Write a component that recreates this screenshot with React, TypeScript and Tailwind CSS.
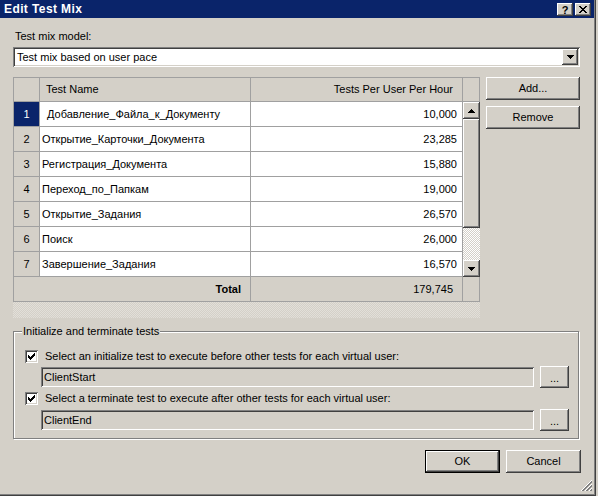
import React from "react";

const raised =
  "shadow-[inset_-1px_-1px_0_#404040,inset_1px_1px_0_#ffffff,inset_-2px_-2px_0_#808080]";
const sunken =
  "shadow-[inset_1px_1px_0_#808080,inset_-1px_-1px_0_#ffffff,inset_2px_2px_0_#404040,inset_-2px_-2px_0_#d4d0c8]";

const rows: [string, string][] = [
  ["Добавление_Файла_к_Документу", "10,000"],
  ["Открытие_Карточки_Документа", "23,285"],
  ["Регистрация_Документа", "15,880"],
  ["Переход_по_Папкам", "19,000"],
  ["Открытие_Задания", "26,570"],
  ["Поиск", "26,000"],
  ["Завершение_Задания", "16,570"],
];

function DownArrow() {
  return (
    <svg width="7" height="4" viewBox="0 0 7 4" shapeRendering="crispEdges">
      <path d="M0 0h7v1h-7z M1 1h5v1h-5z M2 2h3v1h-3z M3 3h1v1h-1z" fill="#000" />
    </svg>
  );
}

function UpArrow() {
  return (
    <svg width="7" height="4" viewBox="0 0 7 4" shapeRendering="crispEdges">
      <path d="M3 0h1v1h-1z M2 1h3v1h-3z M1 2h5v1h-5z M0 3h7v1h-7z" fill="#000" />
    </svg>
  );
}

function Check() {
  return (
    <svg width="13" height="13" viewBox="0 0 13 13" shapeRendering="crispEdges" className="absolute left-0 top-0">
      <path
        d="M3 5h1v3h-1z M4 6h1v3h-1z M5 7h1v3h-1z M6 6h1v3h-1z M7 5h1v3h-1z M8 4h1v3h-1z M9 3h1v3h-1z"
        fill="#000"
      />
    </svg>
  );
}

function CheckBox() {
  return (
    <div className={`relative w-[13px] h-[13px] bg-white shrink-0 ${sunken}`}>
      <Check />
    </div>
  );
}

export default function App() {
  return (
    <div className="relative w-[598px] h-[496px] bg-[#d4d0c8] overflow-hidden font-['Liberation_Sans',Arial,sans-serif] text-[11px] leading-none text-black">
      <div className="w-[596px] h-[496px] flex flex-col shadow-[inset_-1px_-1px_0_#404040,inset_-2px_-2px_0_#808080]">
        {/* Title bar */}
        <div className="w-[594px] h-[18px] bg-[#0a246a] flex items-center pl-[4px] shrink-0">
          <span className="text-white font-bold text-[12px] tracking-[0.4px]">Edit Test Mix</span>
          <div className="ml-auto mr-[3px] flex gap-[2px] self-start mt-[3px]">
            <div className={`w-[16px] h-[13px] bg-[#d4d0c8] flex items-center justify-center ${raised}`}>
              <span className="font-bold text-[11px] leading-none mt-[1px]">?</span>
            </div>
            <div className={`w-[16px] h-[13px] bg-[#d4d0c8] flex items-center justify-center ${raised}`}>
              <svg width="8" height="7" viewBox="0 0 8 7" shapeRendering="crispEdges">
                <path
                  d="M0 0h2v1h-2z M6 0h2v1h-2z M1 1h2v1h-2z M5 1h2v1h-2z M2 2h4v1h-4z M3 3h2v1h-2z M2 4h4v1h-4z M1 5h2v1h-2z M5 5h2v1h-2z M0 6h2v1h-2z M6 6h2v1h-2z"
                  fill="#000"
                />
              </svg>
            </div>
          </div>
        </div>

        {/* Content */}
        <div className="pl-[13px] flex flex-col w-[580px]">
          <div className="mt-[13px] pl-[2px]">Test mix model:</div>

          {/* Dropdown */}
          <div className={`mt-[5px] w-[567px] h-[20px] bg-white flex items-center pl-[4px] pr-[2px] ${sunken}`}>
            <span>Test mix based on user pace</span>
            <div className={`ml-auto w-[16px] h-[16px] bg-[#d4d0c8] flex items-center justify-center ${raised}`}>
              <DownArrow />
            </div>
          </div>

          {/* Table + buttons */}
          <div className="mt-[10px] flex gap-[6px]">
            <div className="w-[467px] flex flex-col">
              <div className="border-l border-t border-[#a0a0a0] flex flex-col">
                {/* header */}
                <div className="flex h-[24px] bg-[#d4d0c8]">
                  <div className="w-[26px] border-r border-b border-[#a0a0a0]" />
                  <div className="w-[211px] border-r border-b border-[#a0a0a0] flex items-center pl-[6px]">
                    Test Name
                  </div>
                  <div className="w-[212px] border-r border-b border-[#a0a0a0] flex items-center justify-end pr-[9px]">
                    Tests Per User Per Hour
                  </div>
                  <div className="w-[17px] border-r border-b border-[#a0a0a0]" />
                </div>
                {/* body */}
                <div className="flex">
                  <div className="flex flex-col w-[449px]">
                    {rows.map(([name, value], i) => (
                      <div key={i} className="flex h-[25px]">
                        <div
                          className={`w-[26px] border-r border-b border-[#a0a0a0] flex items-center justify-center ${
                            i === 0 ? "bg-[#0a246a] text-white" : "bg-[#d4d0c8]"
                          }`}
                        >
                          {i + 1}
                        </div>
                        <div
                          className={`w-[211px] border-r border-b border-[#a0a0a0] bg-white flex items-center ${
                            i === 0 ? "pl-[7px]" : "pl-[2px]"
                          }`}
                        >
                          {name}
                        </div>
                        <div className="w-[212px] border-r border-b border-[#a0a0a0] bg-white flex items-center justify-end pr-[5px]">
                          {value}
                        </div>
                      </div>
                    ))}
                  </div>
                  {/* scrollbar */}
                  <div className="w-[17px] h-[175px] flex flex-col">
                    <div className={`h-[17px] bg-[#d4d0c8] flex items-center justify-center ${raised}`}>
                      <UpArrow />
                    </div>
                    <div className={`h-[109px] bg-[#d4d0c8] ${raised}`} />
                    <div className="h-[32px] bg-[image:repeating-conic-gradient(#ffffff_0%_25%,#d4d0c8_0%_50%)] bg-[length:2px_2px]" />
                    <div className={`h-[17px] bg-[#d4d0c8] flex items-center justify-center ${raised}`}>
                      <DownArrow />
                    </div>
                  </div>
                </div>
                {/* total */}
                <div className="flex h-[25px] bg-[#d4d0c8]">
                  <div className="w-[237px] border-r border-b border-[#a0a0a0] flex items-center justify-end pr-[9px] font-bold">
                    Total
                  </div>
                  <div className="w-[212px] border-r border-b border-[#a0a0a0] flex items-center justify-end pr-[9px]">
                    179,745
                  </div>
                  <div className="w-[17px] border-r border-b border-[#a0a0a0]" />
                </div>
              </div>
              <div className="h-[16px] bg-[image:repeating-conic-gradient(#e2dfd9_0%_25%,#d4d0c8_0%_50%)] bg-[length:2px_2px]" />
            </div>

            <div className="w-[94px] flex flex-col gap-[6px]">
              <div className={`h-[23px] bg-[#d4d0c8] flex items-center justify-center ${raised}`}>Add...</div>
              <div className={`h-[23px] bg-[#d4d0c8] flex items-center justify-center ${raised}`}>Remove</div>
            </div>
          </div>

          {/* Group box */}
          <div className="relative mt-[13px] w-[566px] h-[108px] border border-[#808080] shadow-[inset_1px_1px_0_#ffffff,1px_1px_0_#ffffff] pl-[11px] pt-[18px] flex flex-col">
            <div className="absolute top-[-6px] left-[8px] px-[1px] bg-[#d4d0c8]">Initialize and terminate tests</div>

            <div className="flex items-center gap-[7px] h-[13px]">
              <CheckBox />
              <span>Select an initialize test to execute before other tests for each virtual user:</span>
            </div>
            <div className="mt-[3px] flex items-center h-[22px] pl-[16px] gap-[6px]">
              <div className={`w-[493px] h-[20px] bg-[#d4d0c8] flex items-center pl-[3px] ${sunken}`}>ClientStart</div>
              <div className={`w-[29px] h-[22px] bg-[#d4d0c8] flex items-center justify-center ${raised}`}>
                <span className="mt-[2px]">...</span>
              </div>
            </div>

            <div className="mt-[4px] flex items-center gap-[7px] h-[13px]">
              <CheckBox />
              <span>Select a terminate test to execute after other tests for each virtual user:</span>
            </div>
            <div className="mt-[4px] flex items-center h-[22px] pl-[16px] gap-[6px]">
              <div className={`w-[493px] h-[20px] bg-[#d4d0c8] flex items-center pl-[3px] ${sunken}`}>ClientEnd</div>
              <div className={`w-[29px] h-[22px] bg-[#d4d0c8] flex items-center justify-center ${raised}`}>
                <span className="mt-[2px]">...</span>
              </div>
            </div>
          </div>

          {/* OK / Cancel */}
          <div className="mt-[11px] w-[568px] flex justify-end gap-[6px]">
            <div className={`w-[75px] h-[23px] bg-[#d4d0c8] border border-black flex items-center justify-center ${raised}`}>OK</div>
            <div className={`w-[75px] h-[23px] bg-[#d4d0c8] flex items-center justify-center ${raised}`}>Cancel</div>
          </div>
        </div>
      </div>

      {/* size grip */}
      <svg
        width="12"
        height="12"
        viewBox="0 0 12 12"
        shapeRendering="crispEdges"
        className="absolute right-[5px] bottom-[4px]"
      >
        <path d="M11 0 L0 11" stroke="#ffffff" strokeWidth="1" />
        <path d="M11 1 L1 11 M11 2 L2 11" stroke="#808080" strokeWidth="1" />
        <path d="M11 4 L4 11" stroke="#ffffff" strokeWidth="1" />
        <path d="M11 5 L5 11 M11 6 L6 11" stroke="#808080" strokeWidth="1" />
        <path d="M11 8 L8 11" stroke="#ffffff" strokeWidth="1" />
        <path d="M11 9 L9 11 M11 10 L10 11" stroke="#808080" strokeWidth="1" />
      </svg>
    </div>
  );
}
